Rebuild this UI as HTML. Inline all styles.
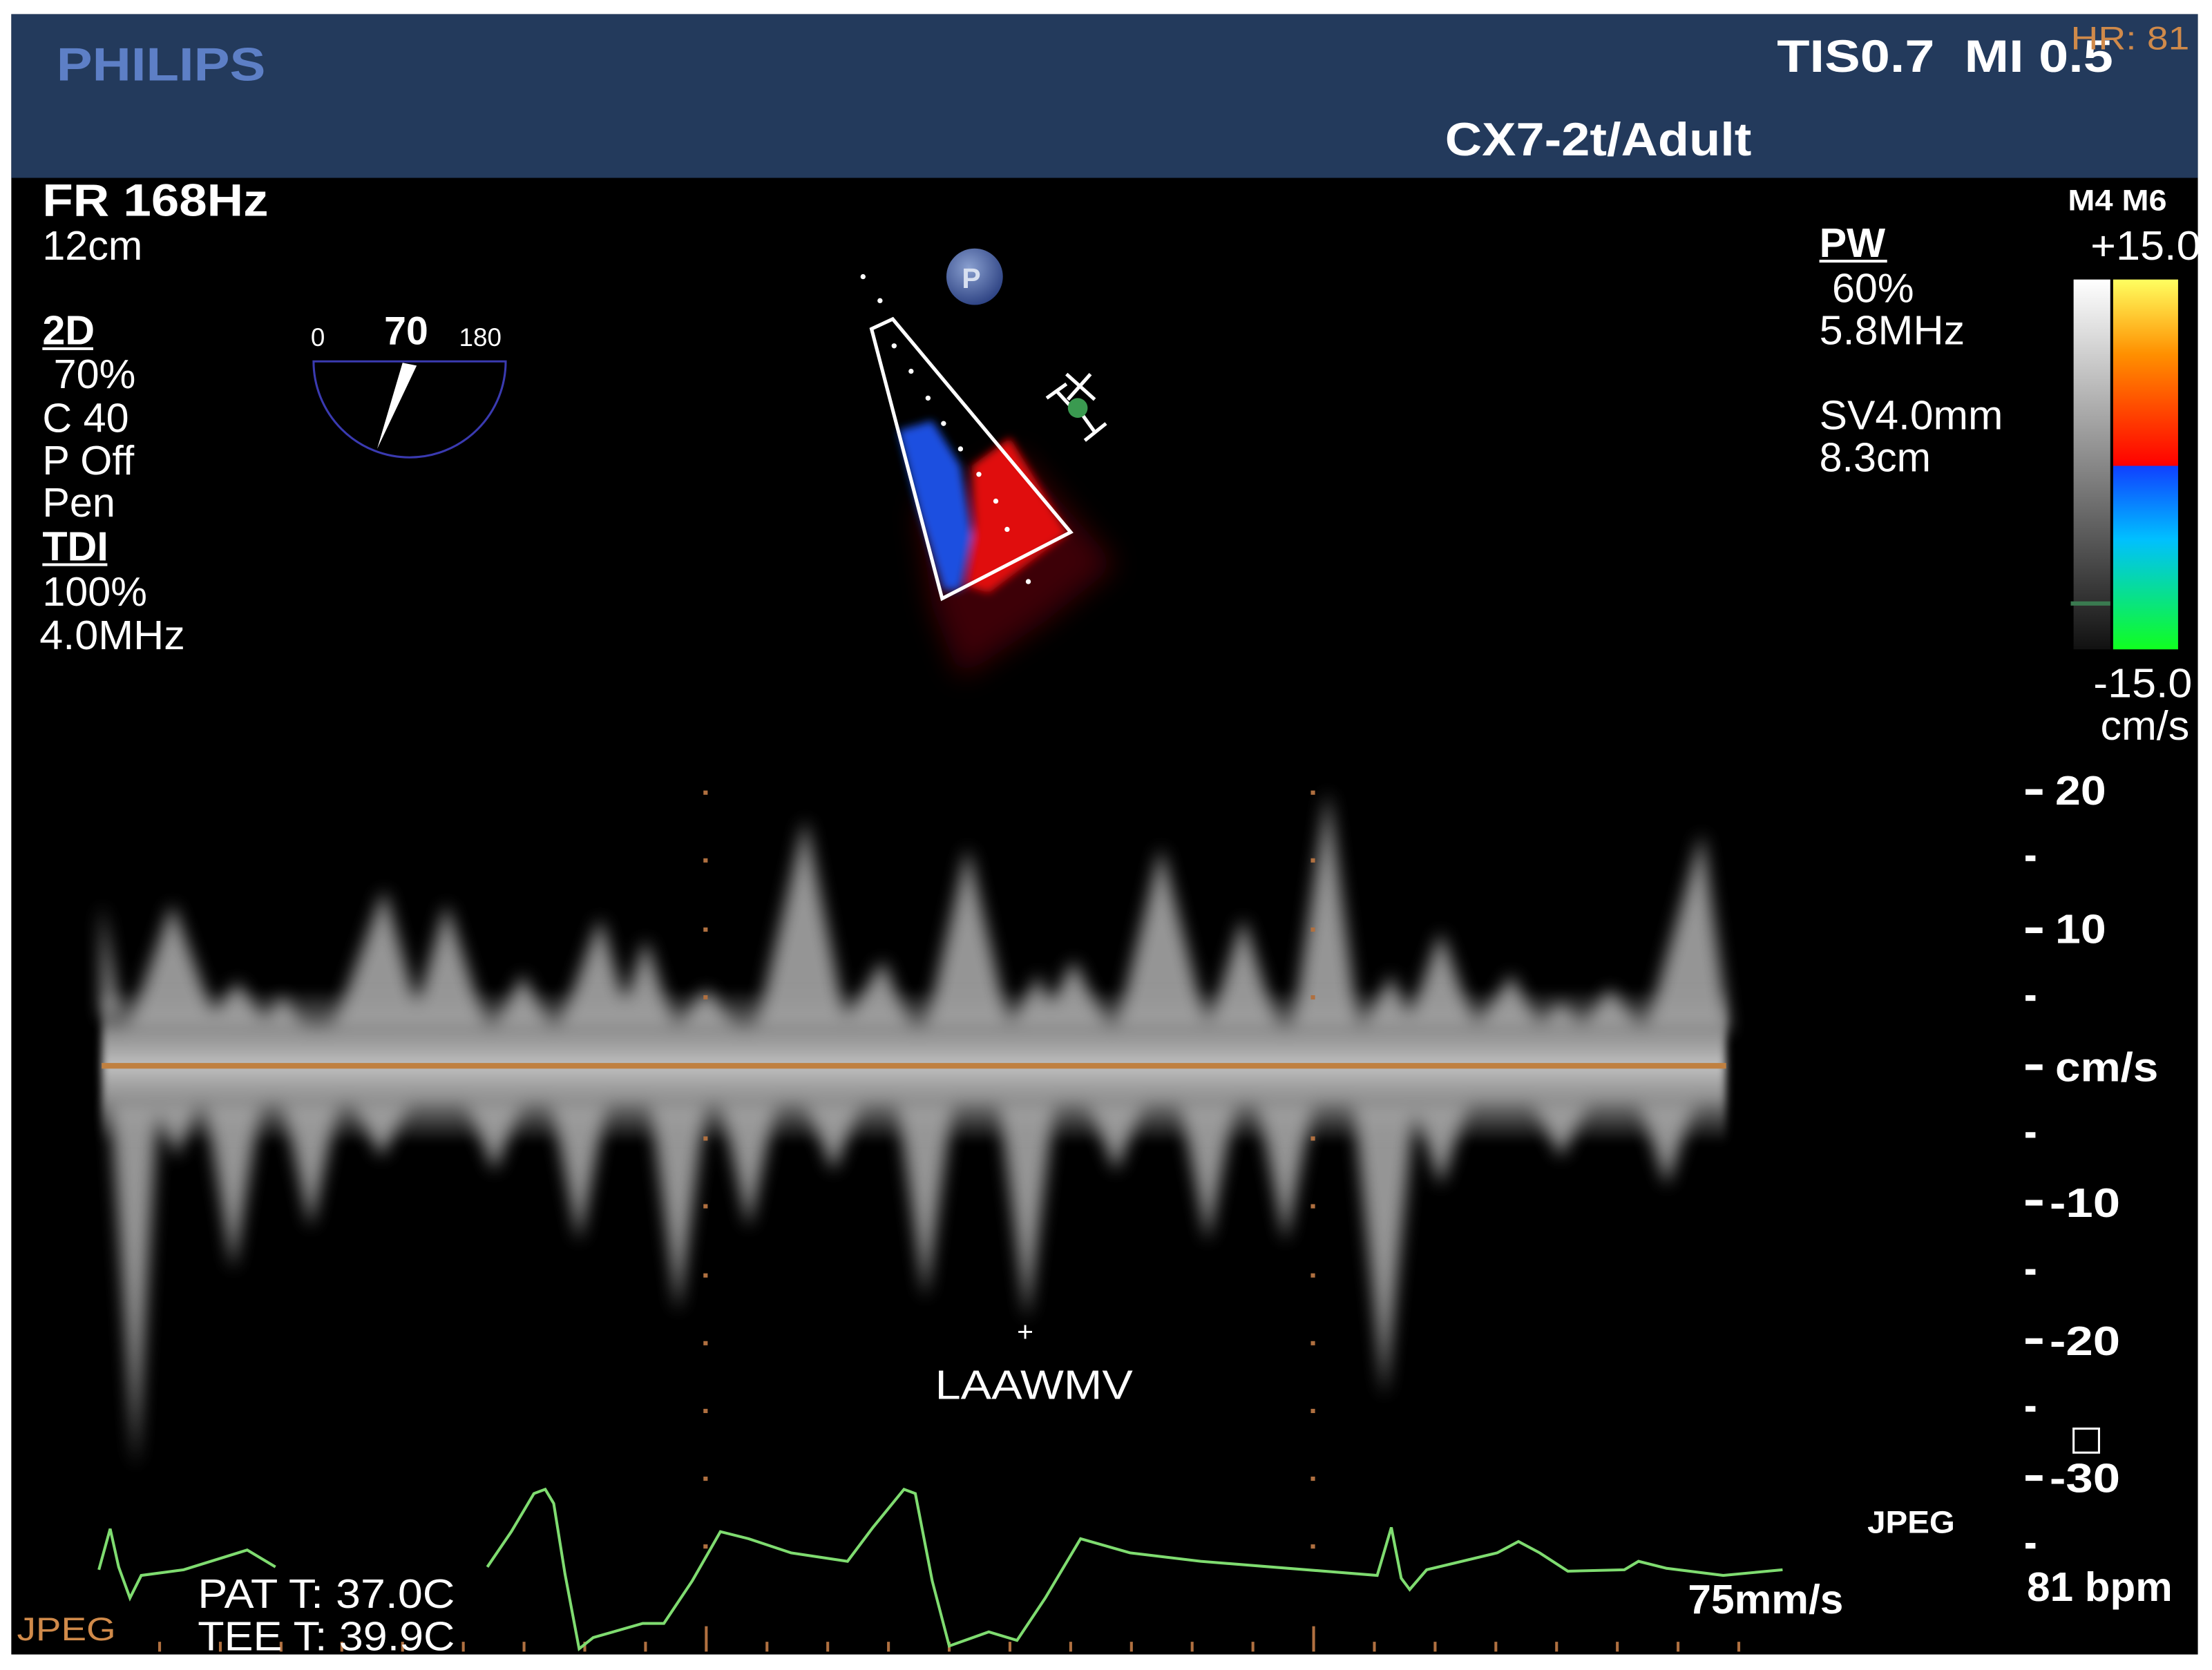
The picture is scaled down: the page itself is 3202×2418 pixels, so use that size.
<!DOCTYPE html>
<html><head><meta charset="utf-8"><style>
html,body{margin:0;padding:0;background:#fff;}
svg{display:block;}
text{font-family:"Liberation Sans",sans-serif;fill:#fff;}
</style></head><body>
<svg width="3202" height="2418" viewBox="0 0 1566 1183" preserveAspectRatio="none" xmlns="http://www.w3.org/2000/svg">
<defs>
<filter id="b1" x="-50%" y="-50%" width="200%" height="200%"><feGaussianBlur stdDeviation="6"/></filter>
<filter id="b2" x="-50%" y="-50%" width="200%" height="200%"><feGaussianBlur stdDeviation="3"/></filter>
<filter id="b3" x="-50%" y="-50%" width="200%" height="200%"><feGaussianBlur stdDeviation="10"/></filter>
<linearGradient id="gg" x1="0" y1="0" x2="0" y2="1"><stop offset="0" stop-color="#fff"/><stop offset="1" stop-color="#111"/></linearGradient>
<linearGradient id="cu" x1="0" y1="0" x2="0" y2="1"><stop offset="0" stop-color="#ffff60"/><stop offset="0.4" stop-color="#ff9000"/><stop offset="1" stop-color="#ff0000"/></linearGradient>
<linearGradient id="cd" x1="0" y1="0" x2="0" y2="1"><stop offset="0" stop-color="#1040ff"/><stop offset="0.4" stop-color="#00c0ff"/><stop offset="1" stop-color="#10ff20"/></linearGradient>
<radialGradient id="pg" cx="0.4" cy="0.35" r="0.7"><stop offset="0" stop-color="#8aa0d0"/><stop offset="1" stop-color="#2a3f80"/></radialGradient>
<linearGradient id="band" x1="0" y1="0" x2="0" y2="1"><stop offset="0" stop-color="#999" stop-opacity="0"/><stop offset="0.3" stop-color="#aaa" stop-opacity="0.85"/><stop offset="0.5" stop-color="#c0c0c0"/><stop offset="0.7" stop-color="#aaa" stop-opacity="0.85"/><stop offset="1" stop-color="#999" stop-opacity="0"/></linearGradient>
</defs>
<rect x="0" y="0" width="1566" height="1183" fill="#fff"/>
<rect x="8" y="10" width="1548" height="1162" fill="#000"/>
<rect x="8" y="10" width="1548" height="116" fill="#233a5c"/>
<text x="40" y="57" font-size="33" font-weight="bold" style="fill:#5d7fc6" textLength="148" lengthAdjust="spacingAndGlyphs">PHILIPS</text>
<text x="1258" y="51" font-size="32" font-weight="bold" textLength="238" lengthAdjust="spacingAndGlyphs">TIS0.7&#160;&#160;MI 0.5</text>
<text x="1466" y="35" font-size="23" style="fill:#d08a4a" textLength="84" lengthAdjust="spacingAndGlyphs">HR: 81</text>
<text x="1023" y="110" font-size="33" font-weight="bold" textLength="217" lengthAdjust="spacingAndGlyphs">CX7-2t/Adult</text>

<g font-size="29">
<text x="30" y="153" font-weight="bold" font-size="32" textLength="160" lengthAdjust="spacingAndGlyphs">FR 168Hz</text>
<text x="30" y="184">12cm</text>
<text x="30" y="244" font-weight="bold">2D</text>
<text x="38" y="275">70%</text>
<text x="30" y="306">C 40</text>
<text x="30" y="336">P Off</text>
<text x="30" y="366">Pen</text>
<text x="30" y="397" font-weight="bold">TDI</text>
<text x="30" y="429">100%</text>
<text x="28" y="460" textLength="103" lengthAdjust="spacingAndGlyphs">4.0MHz</text>
</g>
<rect x="30" y="246" width="36" height="2" fill="#fff"/>
<rect x="30" y="399" width="46" height="2" fill="#fff"/>

<text x="220" y="245" font-size="18">0</text>
<text x="272" y="244" font-size="28" font-weight="bold">70</text>
<text x="325" y="245" font-size="18">180</text>
<path d="M222 256 H358 A68 68 0 0 1 222 256 Z" fill="none" stroke="#3a3ab0" stroke-width="1.5"/>
<polygon points="267,318 285,257 295,259" fill="#fff"/>

<circle cx="690" cy="196" r="20" fill="url(#pg)"/>
<text x="681" y="204" font-size="20" font-weight="bold" style="fill:#d8e0f0">P</text>
<g filter="url(#b3)" opacity="0.55"><polygon points="650,360 720,320 790,400 740,440 680,480 660,430" fill="#700010"/></g>
<g filter="url(#b2)">
<polygon points="636,305 660,298 680,330 688,380 680,418 668,418 650,360" fill="#1a50e0"/>
<polygon points="688,330 715,310 756,378 700,420 684,415 690,370" fill="#e01010"/>
</g>
<polygon points="617,233 632,226 758,377 667,424" fill="none" stroke="#fff" stroke-width="2.5"/>
<g fill="#fff">
<circle cx="611" cy="196" r="1.8"/><circle cx="623" cy="213" r="1.8"/><circle cx="633" cy="245" r="1.8"/><circle cx="645" cy="263" r="1.8"/><circle cx="657" cy="282" r="1.8"/><circle cx="668" cy="300" r="1.8"/><circle cx="680" cy="318" r="1.8"/><circle cx="693" cy="336" r="1.8"/><circle cx="705" cy="355" r="1.8"/><circle cx="713" cy="375" r="1.8"/><circle cx="728" cy="412" r="1.8"/>
</g>
<g stroke="#fff" stroke-width="2.5" fill="none"><path d="M741 282 L755 272 M748 277 L760 290 M755 265 L775 283 M772 265 L756 283 M765 292 L775 306 M768 312 L783 300"/></g>
<circle cx="763" cy="289" r="7" fill="#3a9a50"/>

<g font-size="29">
<text x="1288" y="182" font-weight="bold">PW</text>
<text x="1297" y="214">60%</text>
<text x="1288" y="244" textLength="103" lengthAdjust="spacingAndGlyphs">5.8MHz</text>
<text x="1288" y="304" textLength="130" lengthAdjust="spacingAndGlyphs">SV4.0mm</text>
<text x="1288" y="334">8.3cm</text>
</g>
<rect x="1288" y="184" width="48" height="2" fill="#fff"/>
<text x="1464" y="149" font-size="21" font-weight="bold" textLength="70" lengthAdjust="spacingAndGlyphs">M4 M6</text>
<text x="1480" y="184" font-size="29" textLength="78" lengthAdjust="spacingAndGlyphs">+15.0</text>
<rect x="1468" y="198" width="26" height="262" fill="url(#gg)"/>
<rect x="1496" y="198" width="46" height="132" fill="url(#cu)"/>
<rect x="1496" y="330" width="46" height="130" fill="url(#cd)"/>
<rect x="1466" y="426" width="28" height="3" fill="#3a7a50"/>
<text x="1482" y="494" font-size="29" textLength="70" lengthAdjust="spacingAndGlyphs">-15.0</text>
<text x="1487" y="524" font-size="29" textLength="63" lengthAdjust="spacingAndGlyphs">cm/s</text>

<g filter="url(#b1)" fill="#b0b0b0" opacity="0.85">
<polygon points="72,640 85,720 72,720"/>
<polygon points="90,730 122,640 155,730"/>
<polygon points="145,730 168,695 190,730"/>
<polygon points="185,730 200,705 215,730"/>
<polygon points="235,730 272,630 300,730"/>
<polygon points="290,730 316,640 345,730"/>
<polygon points="350,730 370,690 390,730"/>
<polygon points="395,730 425,650 448,730"/>
<polygon points="436,730 457,665 478,730"/>
<polygon points="480,730 500,700 520,730"/>
<polygon points="535,730 570,580 600,730"/>
<polygon points="595,730 625,680 645,730"/>
<polygon points="655,730 685,600 715,730"/>
<polygon points="715,730 735,690 750,730"/>
<polygon points="735,730 760,680 785,730"/>
<polygon points="790,730 822,600 855,730"/>
<polygon points="855,730 880,650 905,730"/>
<polygon points="915,730 940,560 962,730"/>
<polygon points="965,730 985,690 1000,730"/>
<polygon points="995,730 1020,660 1045,730"/>
<polygon points="1045,730 1070,690 1090,730"/>
<polygon points="1090,730 1105,710 1120,730"/>
<polygon points="1120,730 1140,700 1160,730"/>
<polygon points="1165,730 1205,590 1224,730"/>
<polygon points="78,780 96,1040 112,780"/>
<polygon points="110,780 125,820 140,780"/>
<polygon points="145,780 165,900 185,780"/>
<polygon points="200,780 220,870 240,780"/>
<polygon points="250,780 270,820 290,780"/>
<polygon points="330,780 350,830 370,780"/>
<polygon points="390,780 410,880 430,780"/>
<polygon points="460,780 480,930 500,780"/>
<polygon points="510,780 530,870 550,780"/>
<polygon points="570,780 590,830 610,780"/>
<polygon points="635,780 655,920 675,780"/>
<polygon points="707,780 727,935 747,780"/>
<polygon points="770,780 790,830 810,780"/>
<polygon points="835,780 855,880 875,780"/>
<polygon points="890,780 910,880 930,780"/>
<polygon points="958,780 980,990 1002,780"/>
<polygon points="1000,780 1020,840 1040,780"/>
<polygon points="1085,780 1105,820 1125,780"/>
<polygon points="1160,780 1180,840 1200,780"/>
</g>
<g filter="url(#b2)"><rect x="72" y="700" width="1150" height="110" fill="url(#band)"/></g>
<rect x="72" y="753" width="1150" height="4" fill="#c08040"/>

<g fill="#b07040">
<rect x="498" y="560" width="3" height="3"/><rect x="498" y="608" width="3" height="3"/><rect x="498" y="657" width="3" height="3"/><rect x="498" y="705" width="3" height="3"/><rect x="498" y="805" width="3" height="3"/><rect x="498" y="853" width="3" height="3"/><rect x="498" y="902" width="3" height="3"/><rect x="498" y="950" width="3" height="3"/><rect x="498" y="998" width="3" height="3"/><rect x="498" y="1046" width="3" height="3"/><rect x="498" y="1094" width="3" height="3"/>
<rect x="928" y="560" width="3" height="3"/><rect x="928" y="608" width="3" height="3"/><rect x="928" y="657" width="3" height="3"/><rect x="928" y="705" width="3" height="3"/><rect x="928" y="805" width="3" height="3"/><rect x="928" y="853" width="3" height="3"/><rect x="928" y="902" width="3" height="3"/><rect x="928" y="950" width="3" height="3"/><rect x="928" y="998" width="3" height="3"/><rect x="928" y="1046" width="3" height="3"/><rect x="928" y="1094" width="3" height="3"/>
</g>
<path stroke="#b07040" stroke-width="2" d="M113 1163V1170 M156 1163V1170 M199 1163V1170 M242 1163V1170 M285 1163V1170 M328 1163V1170 M371 1163V1170 M414 1163V1170 M457 1163V1170 M500 1152V1170 M543 1163V1170 M586 1163V1170 M629 1163V1170 M672 1163V1170 M715 1163V1170 M758 1163V1170 M801 1163V1170 M844 1163V1170 M887 1163V1170 M930 1152V1170 M973 1163V1170 M1016 1163V1170 M1059 1163V1170 M1102 1163V1170 M1145 1163V1170 M1188 1163V1170 M1231 1163V1170"/>

<g fill="#fff">
<rect x="1434" y="559" width="12" height="4"/><rect x="1434" y="657" width="12" height="4"/><rect x="1434" y="754" width="12" height="4"/><rect x="1434" y="850" width="12" height="4"/><rect x="1434" y="948" width="12" height="4"/><rect x="1434" y="1045" width="12" height="4"/>
<rect x="1434" y="606" width="7" height="4"/><rect x="1434" y="705" width="7" height="4"/><rect x="1434" y="802" width="7" height="4"/><rect x="1434" y="899" width="7" height="4"/><rect x="1434" y="996" width="7" height="4"/><rect x="1434" y="1093" width="7" height="4"/>
</g>
<g font-size="29" font-weight="bold">
<text x="1455" y="570" textLength="36" lengthAdjust="spacingAndGlyphs">20</text>
<text x="1455" y="668" textLength="36" lengthAdjust="spacingAndGlyphs">10</text>
<text x="1455" y="766" textLength="73" lengthAdjust="spacingAndGlyphs">cm/s</text>
<text x="1451" y="862" textLength="50" lengthAdjust="spacingAndGlyphs">-10</text>
<text x="1451" y="960" textLength="50" lengthAdjust="spacingAndGlyphs">-20</text>
<text x="1451" y="1057" textLength="50" lengthAdjust="spacingAndGlyphs">-30</text>
<text x="1435" y="1134" textLength="103" lengthAdjust="spacingAndGlyphs">81 bpm</text>
</g>
<rect x="1468" y="1012" width="18" height="17" fill="none" stroke="#fff" stroke-width="1.5"/>

<text x="720" y="950" font-size="20">+</text>
<text x="662" y="991" font-size="29" textLength="140" lengthAdjust="spacingAndGlyphs">LAAWMV</text>

<polyline fill="none" stroke="#7fdc70" stroke-width="2" points="70,1112 78,1083 84,1110 92,1132 100,1116 130,1112 175,1098 195,1110"/>
<polyline fill="none" stroke="#7fdc70" stroke-width="2" points="345,1110 362,1085 378,1058 386,1055 392,1065 400,1115 410,1168 420,1160 455,1150 470,1150 490,1120 510,1085 530,1090 560,1100 600,1106 618,1082 640,1055 648,1058 660,1120 672,1166 700,1156 720,1162 740,1132 765,1090 800,1100 850,1106 900,1110 975,1116 985,1082 992,1118 998,1126 1010,1112 1060,1100 1075,1092 1090,1100 1110,1113 1150,1112 1160,1106 1180,1111 1220,1116 1262,1112"/>

<text x="12" y="1162" font-size="23" style="fill:#d08a4a" textLength="70" lengthAdjust="spacingAndGlyphs">JPEG</text>
<text x="140" y="1139" font-size="29" textLength="182" lengthAdjust="spacingAndGlyphs">PAT T: 37.0C</text>
<text x="140" y="1169" font-size="29" textLength="182" lengthAdjust="spacingAndGlyphs">TEE T: 39.9C</text>
<text x="1195" y="1143" font-size="29" font-weight="bold" textLength="110" lengthAdjust="spacingAndGlyphs">75mm/s</text>
<text x="1322" y="1086" font-size="22" font-weight="bold" textLength="62" lengthAdjust="spacingAndGlyphs">JPEG</text>
</svg>
</body></html>
